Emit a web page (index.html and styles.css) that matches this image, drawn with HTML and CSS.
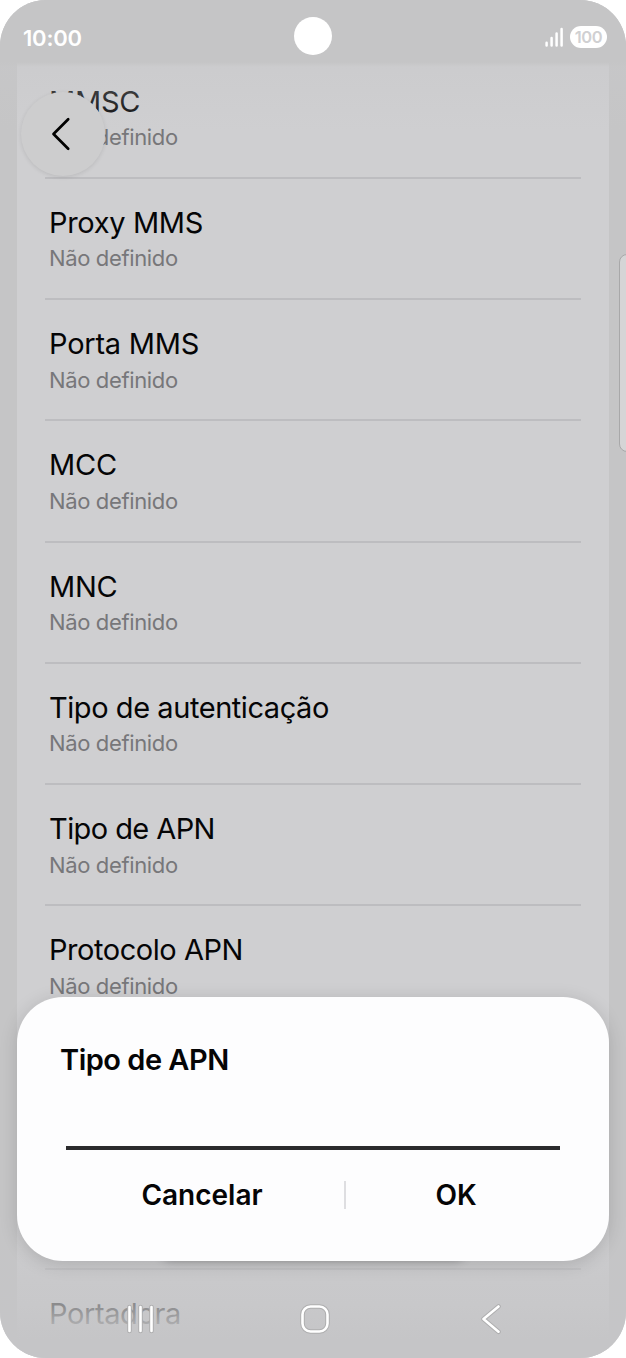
FILE: index.html
```html
<!DOCTYPE html>
<html lang="pt">
<head>
<meta charset="utf-8">
<title>Tipo de APN</title>
<link rel="stylesheet" href="styles.css">
</head>
<body>
<div class="phone">
  <main class="list">
    <section class="row"><h2 class="title t-mmsc">MMSC</h2><p class="sub">Não definido</p></section>
    <section class="row"><h2 class="title t-proxy">Proxy MMS</h2><p class="sub">Não definido</p></section>
    <section class="row"><h2 class="title t-porta">Porta MMS</h2><p class="sub">Não definido</p></section>
    <section class="row"><h2 class="title t-mcc">MCC</h2><p class="sub">Não definido</p></section>
    <section class="row"><h2 class="title t-mnc">MNC</h2><p class="sub">Não definido</p></section>
    <section class="row"><h2 class="title t-auth">Tipo de autenticação</h2><p class="sub">Não definido</p></section>
    <section class="row"><h2 class="title t-tipo">Tipo de APN</h2><p class="sub">Não definido</p></section>
    <section class="row"><h2 class="title t-proto">Protocolo APN</h2><p class="sub">Não definido</p></section>
    <section class="row"></section>
    <section class="row"></section>
    <section class="row"><h2 class="title t-portadora">Portadora</h2></section>
  </main>
  <div class="fade-top"></div>
  <div class="fade-bottom"></div>
  <header class="status">
    <span class="clock">10:00</span>
    <span class="camera"></span>
    <span class="indicators">
      <svg class="signal" width="20" height="21" viewBox="0 0 20 21"><path d="M2.6 15.8v2.8M7.6 11v7.6M12.6 6.4v12.2M17.6 2v16.6" stroke="#fff" stroke-width="2.5" stroke-linecap="round"/></svg>
      <span class="battery">100</span>
    </span>
  </header>
  <button class="back" aria-label="Voltar"><svg width="84" height="84" viewBox="0 0 84 84"><path d="M47.2 27.2 32.5 42 47.2 56.8" fill="none" stroke="#000" stroke-width="2.7" stroke-linecap="round" stroke-linejoin="round"/></svg></button>
  <div class="edge"></div>
  <div class="glow"></div>
  <section class="dialog">
    <h1 class="heading">Tipo de APN</h1>
    <div class="field"></div>
    <div class="actions">
      <button class="action cancel">Cancelar</button>
      <span class="split"></span>
      <button class="action ok">OK</button>
    </div>
  </section>
  <nav class="nav">
    <svg width="626" height="60" viewBox="0 0 626 60" fill="none" stroke-linecap="round" stroke-linejoin="round">
      <g stroke="#aeaeaf" stroke-width="4.6"><path d="M129.5 18v24M140.5 18v24M151.5 18v24M498.5 17.5 483.5 30 498.5 42.7"/><rect x="302.5" y="17.5" width="25" height="25" rx="8"/></g>
      <g stroke="#fff" stroke-width="2.6"><path d="M129.5 18v24M140.5 18v24M151.5 18v24M498.5 17.5 483.5 30 498.5 42.7"/><rect x="302.5" y="17.5" width="25" height="25" rx="8"/></g>
    </svg>
  </nav>
</div>
</body>
</html>
```
FILE: styles.css
```css
* { box-sizing: border-box; }
body { margin: 0; background: #fff; font-family: Inter, Roboto, sans-serif; }
h1, h2, p { margin: 0; font-weight: 400; }
button { border: 0; padding: 0; background: none; font: inherit; color: inherit; }
svg { display: block; }

.phone { position: relative; width: 626px; height: 1358px; overflow: hidden; border-radius: 46px; background: #c5c5c6; }

.list { margin: 0 17px; padding-top: 57.5px; height: 1358px; overflow: hidden; background: #cfcfd1; }
.row { height: 121.25px; margin: 0 28px; padding: 26px 4px 0; border-bottom: 2px solid #bdbdc0; }
.title { font-size: 29px; line-height: 36px; color: #050506; white-space: nowrap; letter-spacing: -0.4px; }
.t-mmsc, .t-mcc, .t-mnc { letter-spacing: -0.25px; }
.t-proxy { letter-spacing: -0.33px; }
.t-porta { letter-spacing: -0.22px; }
.t-auth { letter-spacing: -0.44px; }
.t-tipo { letter-spacing: -0.58px; }
.t-proto { letter-spacing: -0.45px; }
.sub { font-size: 22px; line-height: 28px; margin-top: 3.5px; color: #77777a; letter-spacing: -0.36px; white-space: nowrap; }

.fade-top { position: absolute; inset: 0 0 auto; height: 130px; background: linear-gradient(#c5c5c6 0 62px, rgba(200,200,202,.45) 67px, rgba(200,200,202,0)); }
.fade-bottom { position: absolute; inset: auto 0 0; height: 160px; background: linear-gradient(rgba(197,197,199,0), rgba(197,197,199,.6) 50%, rgba(197,197,199,.7) 67%, #c5c5c7 88%); }

.status { position: absolute; inset: 0 0 auto; height: 74px; padding: 0 19px 0 23px; display: flex; align-items: center; justify-content: space-between; color: #fff; }
.clock { font-size: 22px; font-weight: 600; line-height: 30px; margin-top: 2px; letter-spacing: -0.2px; }
.camera { position: absolute; left: 294px; top: 17px; width: 38px; height: 38px; border-radius: 50%; background: #fff; }
.indicators { display: flex; align-items: center; gap: 6px; }
.battery { width: 37px; height: 22px; border-radius: 11px; background: #fff; color: #d0d0d2; font-size: 16.5px; font-weight: 600; line-height: 22px; text-align: center; letter-spacing: -0.4px; }

.back { position: absolute; left: 21px; top: 92px; width: 84px; height: 84px; border-radius: 50%; background: #cdcdce; box-shadow: 0 1px 4px rgba(0,0,0,.1); }
.edge { position: absolute; left: 619px; top: 254px; width: 20px; height: 198px; border: 1.5px solid #a8a8a9; border-radius: 8px; background: #d5d5d6; }

.glow { position: absolute; left: 160px; top: 1235px; width: 306px; height: 23px; border-radius: 12px; box-shadow: 0 2px 10px rgba(0,0,0,.3); }
.dialog { position: absolute; left: 17px; top: 997px; width: 592px; height: 263.5px; border-radius: 46px; padding: 45px 43px 0; background: #fdfdfe; box-shadow: 0 3px 18px rgba(0,0,0,.15); color: #050506; }
.heading { font-size: 29px; font-weight: 600; line-height: 36px; white-space: nowrap; letter-spacing: -0.5px; }
.field { height: 72px; margin: 0 6px; border-bottom: 4px solid #2b2b2d; }
.actions { display: grid; grid-template-columns: 284px 2px 220px; align-items: center; height: 90px; }
.action { font-size: 28px; font-weight: 600; line-height: 36px; }
.split { height: 28px; background: #dedee1; }

.nav { position: absolute; left: 0; top: 1289px; }
```
